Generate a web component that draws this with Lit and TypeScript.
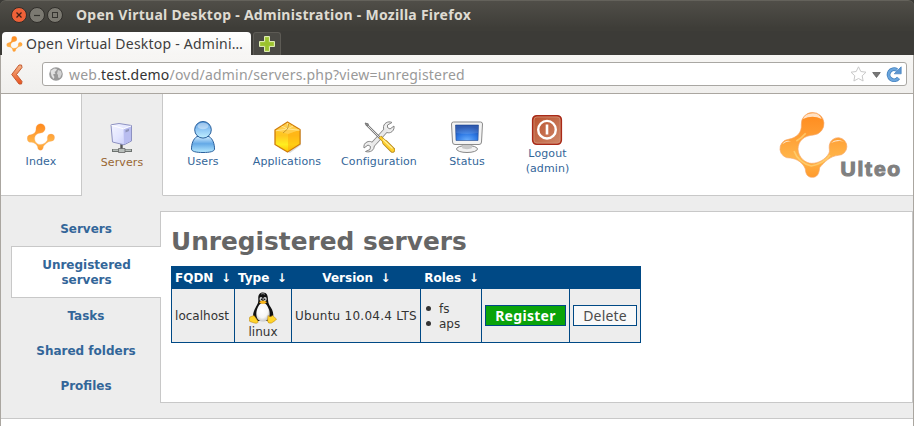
import { LitElement, html, css, svg, nothing } from "lit";
import { customElement, property } from "lit/decorators.js";

const ulteoShape = svg`
  <defs>
    <linearGradient id="ug" x1="0" y1="0" x2="0" y2="1">
      <stop offset="0" stop-color="#ff8a1c"/><stop offset=".3" stop-color="#ff9a30"/>
      <stop offset=".7" stop-color="#ffb54a"/><stop offset="1" stop-color="#ff9a2c"/>
    </linearGradient>
  </defs>
  <path d="M121 72A34 34 0 1 1 158 104C128 106 112 122 111 146C112 172 134 189 152 189C172 189 192 178 203 160C208 152 203 146 205 134A26.500 26.500 0 1 1 232 165C206 168 192 184 176 202C174 222 168 231 154 231C140 231 134 222 133 206C126 188 110 176 88 173A28 28 0 1 1 82 117C107 112 123 98 121 72Z"
    fill="url(#ug)" stroke="#f6a96c" stroke-width="2"/>`;

const glyphs = {
  index: html`<svg width="28" height="28" viewBox="55 32 206 204">${ulteoShape}</svg>`,
  servers: html`<svg width="32" height="32" viewBox="0 0 32 32">
    <defs><linearGradient id="sv" x1="0" y1="0" x2="1" y2="1"><stop offset="0" stop-color="#f4f5ff"/><stop offset=".5" stop-color="#e2e5ff"/><stop offset="1" stop-color="#c0c4f6"/></linearGradient></defs>
    <path d="M15.500 22v5" stroke="#555" stroke-width="2.400"/>
    <path d="M6 28.500h20" stroke="#6d7370" stroke-width="3"/><path d="M7 28.200h18" stroke="#c9cfcc" stroke-width="1.200"/>
    <path d="M12.500 26.500h6.500v4h-6.500z" fill="#b9bfbc" stroke="#666" stroke-width=".8"/>
    <path d="M5 2.800L13 1.500 25.500 3.500V19L18 22.800 6.500 20z" fill="url(#sv)" stroke="#8e92c2" stroke-width="1"/>
    <path d="M17.500 6.800L25 4v14.700L18 22.300z" fill="#b9bdf0"/><path d="M5.500 3.200l12 3.600L25 4" fill="none" stroke="#fff"/>
    <path d="M19.500 8l3.500-1.300v2.200l-3.500 1.500z" fill="#9094bb"/>
  </svg>`,
  users: html`<svg width="32" height="32" viewBox="0 0 32 32">
    <defs><linearGradient id="us" x1="0" y1="0" x2="0" y2="1"><stop offset="0" stop-color="#4d93da"/><stop offset=".45" stop-color="#8cc4f4"/><stop offset="1" stop-color="#c0efff"/></linearGradient>
    <linearGradient id="ub" x1="0" y1="0" x2="0" y2="1"><stop offset="0" stop-color="#d0ebff"/><stop offset=".45" stop-color="#64a9e6"/><stop offset="1" stop-color="#b8eaff"/></linearGradient></defs>
    <path d="M10 15.500C6 18 4.500 23 4.500 28C4.500 30.500 9 31.500 16 31.500S27.500 30.500 27.500 28C27.500 23 26 18 22 15.500Z" fill="url(#ub)" stroke="#2a609c"/>
    <circle cx="16" cy="8.800" r="8.300" fill="url(#us)" stroke="#2a609c"/>
    <ellipse cx="16" cy="5" rx="5.500" ry="3.300" fill="#fff" opacity=".4"/>
  </svg>`,
  applications: html`<svg width="32" height="32" viewBox="0 0 32 32">
    <defs><linearGradient id="ap" x1="0" y1="0" x2="0" y2="1"><stop offset="0" stop-color="#ffc830"/><stop offset=".45" stop-color="#ffc620"/><stop offset=".75" stop-color="#ffee20"/><stop offset="1" stop-color="#ffc400"/></linearGradient></defs>
    <path d="M18 2L30 9v15L19 32 8 27z" fill="#888" opacity=".3"/>
    <path d="M16.500 1L29 8.500v14.500L16.500 31 4 23.500V9z" fill="url(#ap)" stroke="#d07c0c" stroke-width="1.300" stroke-linejoin="round"/>
    <path d="M17 13L28.300 9v13.700L17 30z" fill="#ffa408" opacity=".45"/>
    <path d="M4.800 9.500L17 13 28.300 9 16.500 1.800z" fill="#ffcf55" opacity=".8"/>
    <path d="M4.800 9.800L16.500 8l12 1.200M16.500 8V2M16.500 8l-6-3M16.500 8L22 5" stroke="#ffeaa0" fill="none" stroke-width=".8"/>
    <path d="M17.500 3L16.500 8 12 12" stroke="#b98a20" stroke-width=".8" fill="none"/>
  </svg>`,
  configuration: html`<svg width="32" height="32" viewBox="0 0 32 32">
    <path d="M8 25.500L25 7" stroke="#858585" stroke-width="5.200"/>
    <path d="M29 1.500C25-.5 20 2.500 20.500 7C21 11 24.500 12.500 27.500 11.500C30 10.500 31.500 8 31 5L27 8 24.500 6.500V4z" fill="#ededed" stroke="#858585"/>
    <path d="M2.500 30.500C7 32 12 29 11 24.500C10.500 21 7 19.500 4 21C1.500 22 .5 24.500 1 27L5 24l2.500 1.500-.5 3z" fill="#ededed" stroke="#858585"/>
    <path d="M9 24.500L24 8" stroke="#e9e9e9" stroke-width="3.600"/>
    <path d="M3 3L17 17" stroke="#777" stroke-width="2.400"/><path d="M3 3L17 17" stroke="#ddd" stroke-width="1"/>
    <path d="M2 2l3.500 1L4 5z" fill="#999" stroke="#777"/>
    <path d="M17 16L23 22" stroke="#b88a19" stroke-width="3.500"/>
    <path d="M22 21.500L29.500 29" stroke="#b88a19" stroke-width="5.400" stroke-linecap="round"/>
    <path d="M17 16L23 22" stroke="#ffd02e" stroke-width="2.200"/>
    <path d="M22 21.500L29.500 29" stroke="#ffd02e" stroke-width="3.800" stroke-linecap="round"/>
    <path d="M20 18.500L29.500 27.500" stroke="#fff0a0" stroke-width="1.100"/>
  </svg>`,
  status: html`<svg width="32" height="32" viewBox="0 0 32 32">
    <defs><radialGradient id="st" cx=".5" cy="1" r=".9"><stop offset="0" stop-color="#6bb0ff"/><stop offset=".5" stop-color="#2e79e4"/><stop offset="1" stop-color="#1243a5"/></radialGradient></defs>
    <ellipse cx="16" cy="28" rx="10.500" ry="3.500" fill="#f2f2f2" stroke="#888"/>
    <path d="M12 23h8l1 4c-2 1.500-8 1.500-10 0z" fill="#c8c8c8"/>
    <path d="M2.500 1h27q2 0 2 2l-1 18q0 2.500-2.500 2.500H4Q1.500 23.500 1.500 21L.5 3Q.5 1 2.500 1z" fill="#f3f3f3" stroke="#8b8b8b"/>
    <path d="M4.500 4h23L27 19.500H5z" fill="url(#st)" stroke="#264b8f" stroke-width=".6"/>
    <path d="M4.800 4.400h22.400l-.4 7.600Q16 14 5.200 12z" fill="#fff" opacity=".13"/>
  </svg>`,
  logout: html`<svg class="power" width="32" height="32" viewBox="0 0 32 32">
    <defs><linearGradient id="lo" x1="0" y1="0" x2="1" y2="1"><stop offset="0" stop-color="#b9502c"/><stop offset="1" stop-color="#d08a6c"/></linearGradient></defs>
    <rect x="1.700" y="1.700" width="28.600" height="28.600" rx="4" fill="url(#lo)" stroke="#a92a18" stroke-width="1.600"/>
    <rect x="3" y="3" width="26" height="26" rx="3" fill="none" stroke="#d18f75" stroke-width=".8"/>
    <circle cx="16" cy="15.700" r="8.800" fill="none" stroke="#fff" stroke-width="2.400"/>
    <path d="M16 10.500v10" stroke="#fff" stroke-width="2.600"/>
  </svg>`,
};

const tux = html`<svg class="tux" width="28" height="32" viewBox="0 0 28 32">
  <defs><radialGradient id="tb" cx=".45" cy=".4" r=".65"><stop offset="0" stop-color="#fff"/><stop offset=".6" stop-color="#f6f6f6"/><stop offset="1" stop-color="#bbb"/></radialGradient></defs>
  <path d="M14 .5C10 .5 9 3.500 9.300 8C9.500 12 6.500 14.500 5 19C3.500 23 3.500 27 7 29H21C25 27 25 22 23 17.500C21.500 14.500 19 12 19 8C19 3.500 18 .5 14 .5Z" fill="#111"/>
  <path d="M14 11C10.500 11 9.500 14 8 17.500C6.500 22 7 29.500 14 29.500S21.500 22 20 17.500C18.500 14 17.500 11 14 11Z" fill="url(#tb)"/>
  <ellipse cx="12" cy="7" rx="1.500" ry="2" fill="#ddd"/><ellipse cx="16" cy="7" rx="1.700" ry="2" fill="#ddd"/>
  <circle cx="12.500" cy="7.300" r=".8"/><circle cx="15.700" cy="7.300" r=".8"/>
  <path d="M10 10.300Q14 6.500 18 10.300Q14 13.500 10 10.300Z" fill="#f9b51b"/>
  <path d="M12 2Q14 1 16 2.300" stroke="#888" fill="none"/>
  <path d="M.8 25L5 23.500L9 29Q9.500 32 5.500 31L.8 29.500Q-.3 28 .8 25Z" fill="#ffd42a" stroke="#b37a08" stroke-width=".5"/>
  <path d="M19 23.500Q21 26 23.500 23.500L27.500 27Q27.500 28 22.500 31Q19 32 18.500 29Z" fill="#ffd42a" stroke="#b37a08" stroke-width=".5"/>
</svg>`;

@customElement("window-frame")
class WindowFrame extends LitElement {
  static styles = css`
    :host { display: block; font-family: "Noto Sans", sans-serif; }
    svg { display: block; flex: none; }
    .title { height: 31px; box-sizing: border-box; display: flex; align-items: center; padding: 0 0 2px 11px; background: linear-gradient(#504e48, #3e3d38 90%); border-top: 1px solid #64625b; border-radius: 6px 6px 0 0; }
    .controls { display: flex; gap: 2px; margin-right: 13px; }
    .caption { margin-top: -2px; color: #dfdbd2; font: bold 14px "Noto Sans", sans-serif; letter-spacing: 0.27px; white-space: nowrap; }
    .tabs { height: 24px; display: flex; align-items: flex-end; gap: 2px; padding-left: 2px; background: #3c3b37; }
    .tab { width: 249px; height: 23px; box-sizing: border-box; display: flex; align-items: center; padding: 0 0 0 4px; gap: 3px; border-radius: 4px 4px 0 0; background: linear-gradient(#fff, #f6f5f3); }
    .tabname { color: #3e3e3e; font-size: 14px; letter-spacing: 0.23px; white-space: nowrap; }
    .plus { width: 26px; height: 22px; display: grid; place-items: center; border: 1px solid #5d5b55; border-bottom: 0; border-radius: 3px 3px 0 0; background: #4a4944; }
    .bar { height: 39px; box-sizing: border-box; display: flex; align-items: flex-start; padding: 7px 6px 0 10px; background: linear-gradient(#f7f6f4, #f0efed); border: solid #aaa6a0; border-width: 0 1px 1px; }
    .back { width: 31px; padding-top: 2px; }
    .address { flex: 1; height: 24px; box-sizing: border-box; display: flex; align-items: center; padding: 0 4px 0 6px; border: 1px solid #a9a7a3; border-radius: 3px; background: #fff; }
    .url { flex: 1; margin-left: 6px; color: #999; font-size: 14px; letter-spacing: 0.21px; white-space: nowrap; }
    .host { color: #333; }
    .tools { display: flex; align-items: center; gap: 5px; }
  `;
  render() {
    return html`
      <div class="title">
        <div class="controls">
          <svg width="16" height="16" viewBox="0 0 16 16"><circle cx="8" cy="8" r="7.500" fill="#ee6138" stroke="#302e2a"/><path d="M5.500 5.500l5 5m0-5l-5 5" stroke="#402018" stroke-width="1.300"/></svg>
          <svg width="16" height="16" viewBox="0 0 16 16"><circle cx="8" cy="8" r="7.500" fill="#7b7971" stroke="#302e2a"/><path d="M5 8.500h6" stroke="#34332f" stroke-width="1.200"/></svg>
          <svg width="16" height="16" viewBox="0 0 16 16"><circle cx="8" cy="8" r="7.500" fill="#7b7971" stroke="#302e2a"/><rect x="5.500" y="5.500" width="5" height="5" fill="none" stroke="#34332f"/></svg>
        </div>
        <div class="caption">Open Virtual Desktop - Administration - Mozilla Firefox</div>
      </div>
      <div class="tabs">
        <div class="tab"><svg width="17" height="16" viewBox="55 32 206 204">${ulteoShape}</svg><span class="tabname">Open Virtual Desktop - Admini…</span></div>
        <div class="plus"><svg width="16" height="16" viewBox="0 0 16 16"><path d="M5.500.5h5v5h5v5h-5v5h-5v-5h-5v-5h5z" fill="#a9cb45" stroke="#dcebb0"/><path d="M6.500 2h3v4.500H14v3H9.500V14h-3V9.500H2v-3h4.500z" fill="#9bc22e"/></svg></div>
      </div>
      <div class="bar">
        <div class="back"><svg width="12" height="21" viewBox="0 0 12 21"><defs><linearGradient id="bk" x1="0" y1="0" x2="0" y2="1"><stop stop-color="#f5b78b"/><stop offset="1" stop-color="#e9511d"/></linearGradient></defs><path d="M8 1h2.500l.5 2.500-5.500 7 5.500 7-.5 2.500H8L.7 10.500z" fill="url(#bk)" stroke="#c45a31"/></svg></div>
        <div class="address">
          <svg width="14" height="14" viewBox="0 0 14 14"><circle cx="7" cy="7" r="6.800" fill="#999"/><path d="M1.500 4L5 1.500 8 2 7 4 5.500 5 6.500 6.500 4 7.500 5.500 10 4.500 12 2.500 9z" fill="#e2e2e2"/><path d="M9 3l3 1 .8 3L11 11 9 10.500V8L8 6.500z" fill="#d3d3d3"/></svg>
          <span class="url">web.<span class="host">test.demo</span>/ovd/admin/servers.php?view=unregistered</span>
          <div class="tools">
            <svg width="17" height="16" viewBox="0 0 17 16"><path d="M8.500.8l2.300 4.700 5.200.7-3.800 3.600.9 5.200-4.600-2.500L3.900 15l.9-5.200L1 6.200l5.200-.7z" fill="#fff" stroke="#c9c9c9" stroke-linejoin="round"/></svg>
            <svg width="9" height="7" viewBox="0 0 9 7"><path d="M.7 1.500h7.600L4.500 6.500z" fill="#777" stroke="#555" stroke-width=".7"/></svg>
            <svg width="16" height="16" viewBox="0 0 16 16"><path d="M12.500 12A5.500 5.500 0 1 1 11 4" fill="none" stroke="#4380bd" stroke-width="3.800"/><path d="M12.500 12A5.500 5.500 0 1 1 11 4" fill="none" stroke="#6aa5dd" stroke-width="2.400"/><path d="M15.200.8v7H8.200z" fill="#5c97d2" stroke="#4380bd" stroke-width=".7"/></svg>
          </div>
        </div>
      </div>`;
  }
}

@customElement("top-nav")
class TopNav extends LitElement {
  static styles = css`
    :host { display: flex; height: 102px; justify-content: space-between; background: #fff; font: 11px/15px "DejaVu Sans", sans-serif; }
    .items { display: flex; }
    .item { box-sizing: border-box; width: 80px; height: 102px; display: flex; flex-direction: column; align-items: center; justify-content: center; color: #336699; text-align: center; white-space: pre-line; letter-spacing: 0.1px; border-bottom: 1px solid #c8c8c8; }
    .picture { height: 32px; display: grid; place-items: center; margin-bottom: 1px; }
    .picture svg { display: block; }
    .index { width: 81px; border-right: 1px solid #c8c8c8; }
    .servers { width: 81px; border-right: 1px solid #c8c8c8; border-bottom-color: #ededed; background: #ededed; color: #996633; padding-top: 2px; }
    .applications { width: 88px; }
    .configuration { width: 96px; }
    .status { width: 80px; }
    .logout { width: 81px; padding-top: 1px; }
    .logout .picture { margin-bottom: 0; }
    .power { margin-left: -1px; }
    .brand { flex: 1; box-sizing: border-box; border-bottom: 1px solid #c8c8c8; display: flex; justify-content: flex-end; align-items: flex-end; padding: 0 11px 16px 0; }
    .brand svg { display: block; }
    .name { margin: 0 0 -1px -8px; color: #808080; font: bold 21px/23px "Liberation Sans", sans-serif; letter-spacing: 1.8px; -webkit-text-stroke: 1.200px #808080; }
  `;
  render() {
    const items: [keyof typeof glyphs, string][] = [
      ["index", "Index"], ["servers", "Servers"], ["users", "Users"], ["applications", "Applications"],
      ["configuration", "Configuration"], ["status", "Status"], ["logout", "Logout\n(admin)"],
    ];
    return html`
      <div class="items">${items.map(([id, label]) => html`<div class="item ${id}"><span class="picture">${glyphs[id]}</span><span>${label}</span></div>`)}</div>
      <div class="brand">
        <svg width="70" height="68" viewBox="54 32 210 204">${ulteoShape}
          <path d="M126 56Q133 40 154 39T182 56Q155 43 126 56M64 132Q72 117 92 123Q77 121 64 132M210 128Q226 112 250 125Q233 117 210 128" fill="#fff" opacity=".75"/>
          <path d="M134 99Q124 112 106 122M99 152Q112 187 151 197Q188 190 207 164" fill="none" stroke="#ffd67a" stroke-width="5" opacity=".7"/>
        </svg>
        <span class="name">Ulteo</span>
      </div>`;
  }
}

@customElement("side-menu")
class SideMenu extends LitElement {
  static styles = css`
    :host { display: flex; flex-direction: column; width: 150px; font: bold 12px/15px "DejaVu Sans", sans-serif; color: #336699; text-align: center; position: relative; }
    .entry { height: 35px; box-sizing: border-box; display: flex; align-items: center; justify-content: center; padding: 2px 20px 0; }
    .on { height: 52px; background: #fff; border: 1px solid #c8c8c8; border-right: 0; }
  `;
  @property() current = "";
  render() {
    return ["Servers", "Unregistered servers", "Tasks", "Shared folders", "Profiles"].map(
      (name) => html`<div class="entry ${name === this.current ? "on" : ""}">${name}</div>`);
  }
}

@customElement("server-table")
class ServerTable extends LitElement {
  static styles = css`
    :host { display: block; font: 12px/15px "DejaVu Sans", sans-serif; color: #333; }
    .row { box-sizing: border-box; display: grid; grid-template-columns: 63px 57px 129px 61px 88px 71px; width: 470px; border-left: 1px solid #004985; }
    .head { height: 23px; padding-top: 1px; background: #004985; color: #fff; font-weight: bold; align-items: center; }
    .head .cell { text-align: center; white-space: pre; word-spacing: -0.4px; }
    .head .first { text-align: left; padding-left: 3px; }
    .data { height: 54px; background: #ededed; border-bottom: 1px solid #004985; }
    .data .cell { display: flex; flex-direction: column; align-items: center; justify-content: center; border-right: 1px solid #004985; white-space: nowrap; }
    .text { padding-top: 2px; }
    .host { padding-right: 2px; }
    .version { letter-spacing: 0.26px; }
    .tux { display: block; margin-bottom: 1px; }
    .roles-list { margin: 0; padding: 2px 18px 0 0; list-style: none; align-self: flex-start; }
    .role { display: flex; align-items: center; }
    .role::before { content: ""; width: 5px; height: 5px; border-radius: 50%; background: #333; margin: 0 8px 2px 5px; }
    .button { box-sizing: border-box; width: 81px; height: 21px; display: grid; place-items: center; border: 1px solid #004985; font: bold 14px/18px "Noto Sans", sans-serif; letter-spacing: 0.3px; background: #0aa30a; color: #fff; }
    .plain { width: 64px; background: #f9f9f9; color: #4c4c4c; font-weight: normal; letter-spacing: 0.15px; }
  `;
  render() {
    const heads = ["FQDN", "Type", "Version", "Roles", "", ""];
    return html`
      <div class="row head">${heads.map((h, i) => html`<div class="cell ${i < 2 ? "first" : ""}">${h ? `${h}  ↓` : nothing}</div>`)}</div>
      <div class="row data">
        <div class="cell"><span class="text host">localhost</span></div>
        <div class="cell">${tux}<span>linux</span></div>
        <div class="cell"><span class="text version">Ubuntu 10.04.4 LTS</span></div>
        <div class="cell"><ul class="roles-list"><li class="role">fs</li><li class="role">aps</li></ul></div>
        <div class="cell"><span class="button">Register</span></div>
        <div class="cell"><span class="button plain">Delete</span></div>
      </div>`;
  }
}

@customElement("app-root")
class AppRoot extends LitElement {
  static styles = css`
    :host { display: block; width: 914px; height: 426px; overflow: hidden; background: #3c3b37; }
    .page { height: 332px; box-sizing: border-box; border: solid #aaa6a0; border-width: 0 1px; background: #fff; }
    .body { height: 223px; box-sizing: border-box; display: flex; padding: 15px 0 15px 10px; background: #ededed; border-bottom: 1px solid #c8c8c8; }
    .menu { z-index: 1; }
    .panel { flex: 1; box-sizing: border-box; margin-left: -1px; height: 192px; padding: 15px 10px; background: #fff; border: 1px solid #c8c8c8; }
    .heading { margin: 0 0 9px; color: #666; font: bold 24.800px/30px "DejaVu Sans", sans-serif; }
  `;
  render() {
    return html`
      <window-frame></window-frame>
      <div class="page">
        <top-nav></top-nav>
        <div class="body">
          <side-menu class="menu" current="Unregistered servers"></side-menu>
          <div class="panel"><h1 class="heading">Unregistered servers</h1><server-table></server-table></div>
        </div>
      </div>`;
  }
}
